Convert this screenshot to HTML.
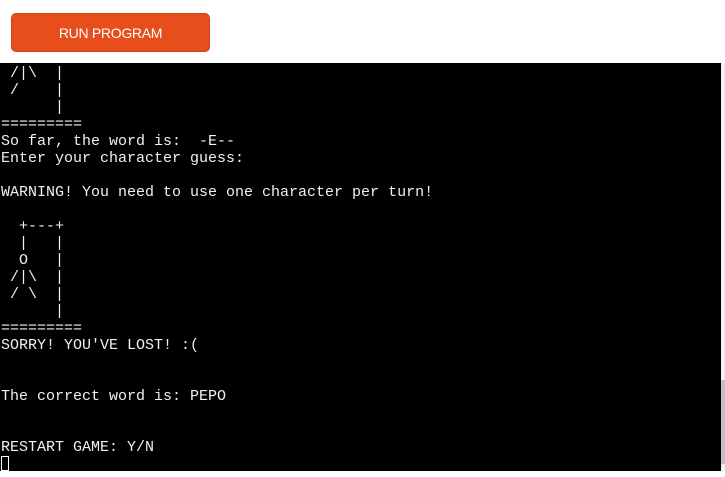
<!DOCTYPE html>
<html><head><meta charset="utf-8"><style>
html,body{margin:0;padding:0;background:#fff;width:725px;height:477px;overflow:hidden}
.btn{position:absolute;left:11px;top:13px;width:199px;height:39px;background:#e84e1b;border-radius:5px;border:1px solid #c9441a;box-sizing:border-box;color:#fff;font:14px "Liberation Sans",sans-serif;text-align:center;line-height:38px;letter-spacing:-0.3px}
.term{position:absolute;left:0;top:63px;width:721px;height:408px;background:#000;overflow:hidden}
pre{margin:0;position:absolute;left:1px;top:1.5px;color:#f0f0f0;font:15px/17px "Liberation Mono",monospace}
.sb{position:absolute;left:721px;top:63px;width:4px;height:408px;background:#f0f0f0}
.thumb{position:absolute;left:721px;top:380px;width:4px;height:84px;background:#c1c1c1}
.cur{display:inline-block;width:8px;height:15px;border:1px solid #fff;box-sizing:border-box;vertical-align:-3px}
</style></head><body>
<div class="btn">RUN PROGRAM</div>
<div class="term"><pre> /|\  |
 /    |
      |
=========
So far, the word is:  -E--
Enter your character guess:

WARNING! You need to use one character per turn!

  +---+
  |   |
  O   |
 /|\  |
 / \  |
      |
=========
SORRY! YOU'VE LOST! :(


The correct word is: PEPO


RESTART GAME: Y/N
<span class="cur"></span></pre></div>
<div class="sb"></div><div class="thumb"></div>
</body></html>
